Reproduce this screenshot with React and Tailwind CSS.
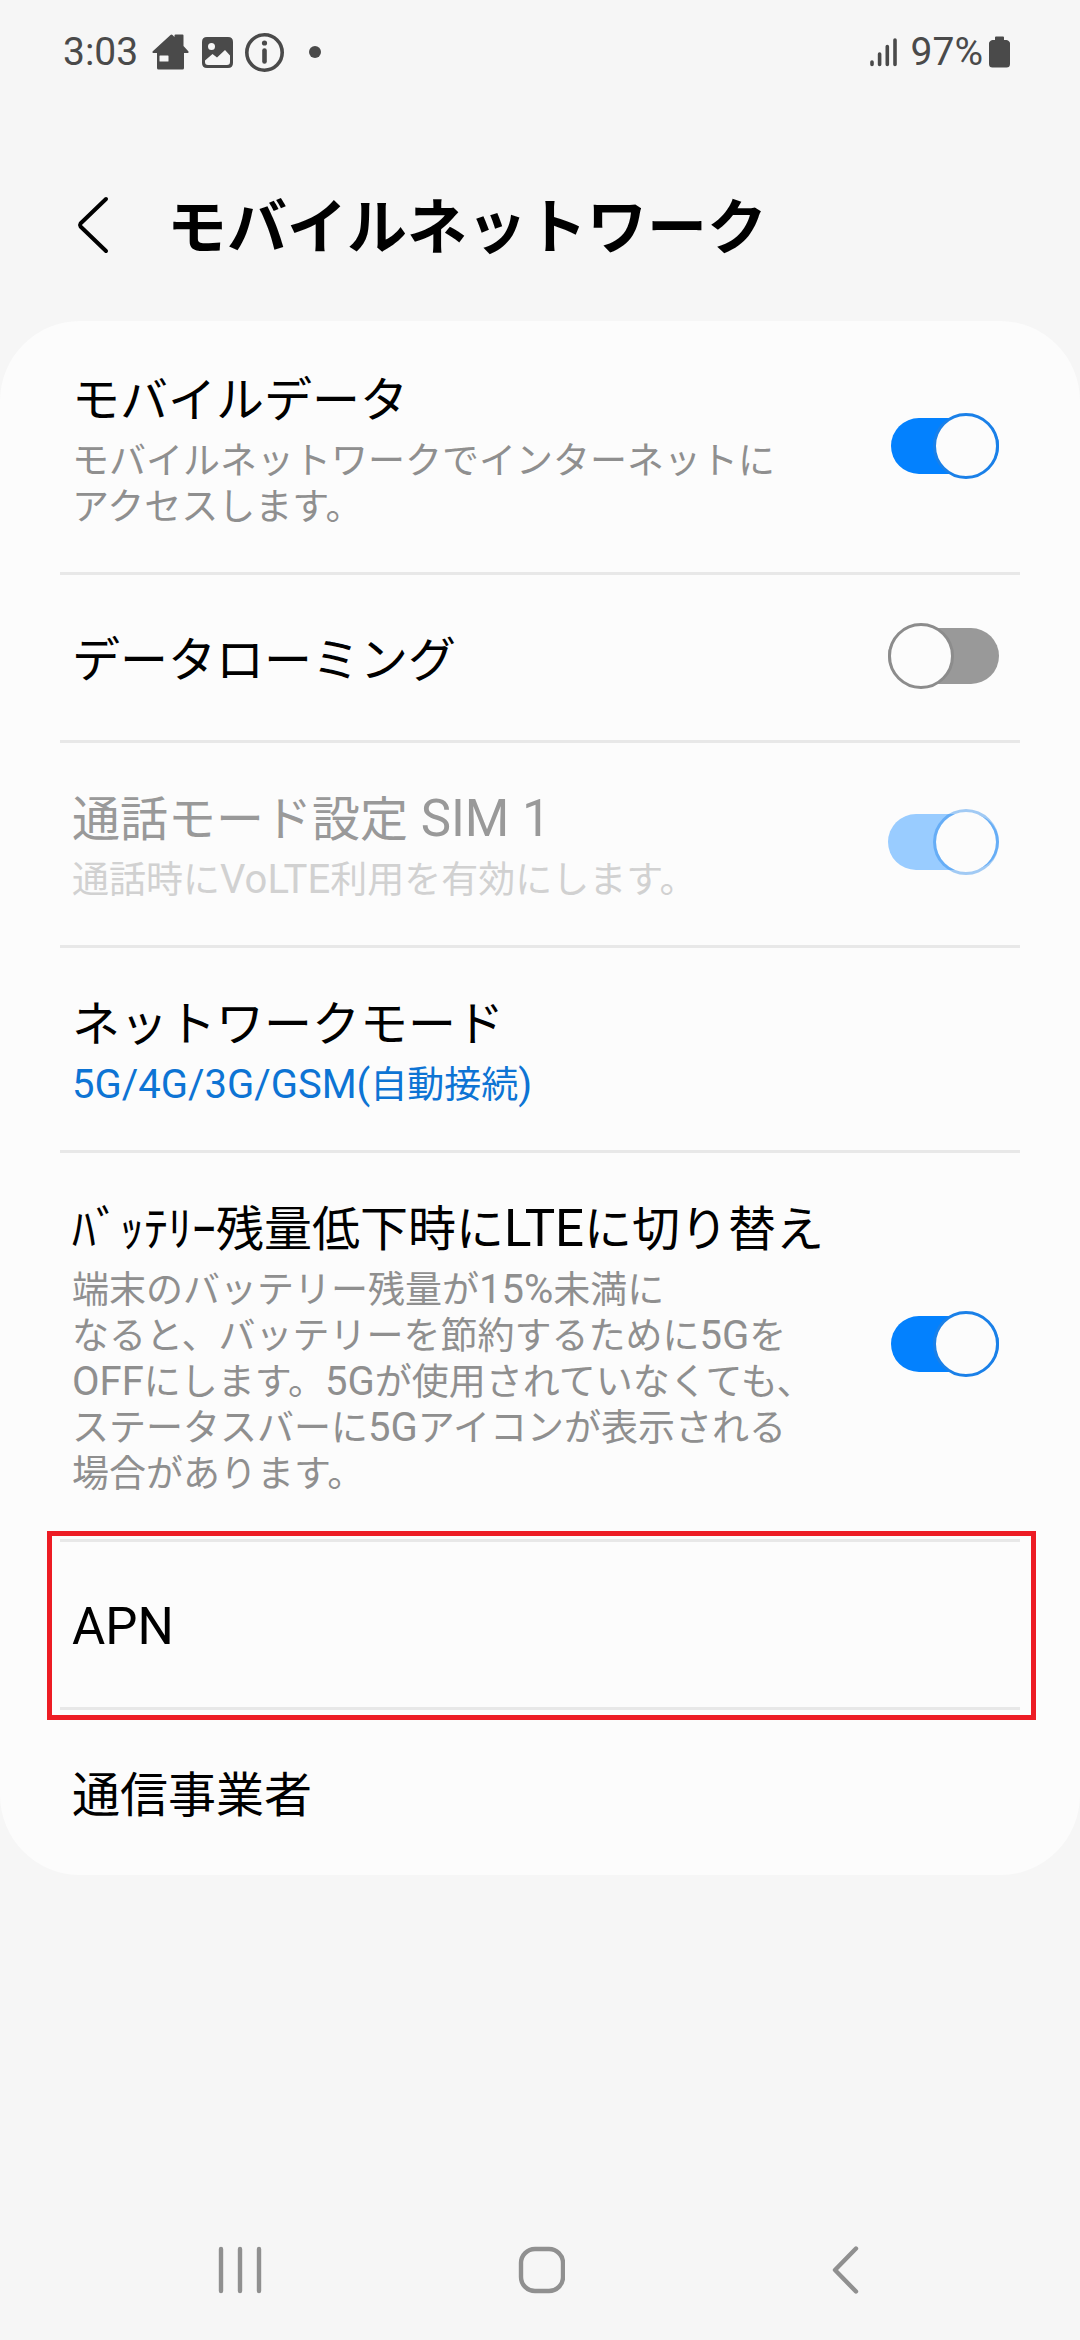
import React from "react";

const sections = [
  {
    id: "mobile-data",
    title: "モバイルデータ",
    lines: ["モバイルネットワークでインターネットに", "アクセスします。"],
    toggle: true,
    on: true,
  },
  { id: "roaming", title: "データローミング", toggle: true, on: false },
  {
    id: "call-mode",
    title: "通話モード設定 SIM 1",
    lines: ["通話時にVoLTE利用を有効にします。"],
    toggle: true,
    on: true,
    disabled: true,
  },
  {
    id: "network-mode",
    title: "ネットワークモード",
    lines: ["5G/4G/3G/GSM(自動接続)"],
    isValue: true,
  },
  {
    id: "battery-lte",
    title: "ﾊﾞｯﾃﾘｰ残量低下時にLTEに切り替え",
    lines: [
      "端末のバッテリー残量が15%未満に",
      "なると、バッテリーを節約するために5Gを",
      "OFFにします。5Gが使用されていなくても、",
      "ステータスバーに5Gアイコンが表示される",
      "場合があります。",
    ],
    toggle: true,
    on: true,
  },
  { id: "apn", title: "APN", highlighted: true },
  { id: "carriers", title: "通信事業者" },
];

// Latin runs are set slightly larger than the Japanese around them
function MixedText({ text, latinClass }) {
  return text.split(/([\x20-\x7e]+)/).map((part, i) =>
    i % 2 === 1 ? (
      <span key={i} className={latinClass}>
        {part}
      </span>
    ) : (
      part
    )
  );
}

function StatusBar() {
  return (
    <div className="flex h-[104px] items-center justify-between pl-[63px] pr-[70px] text-[39px] text-[#4a4a4a]">
      <div className="flex items-center">
        <span className="w-[89px]">3:03</span>
        <svg width="37" height="36" viewBox="0 0 37 36" fill="currentColor" aria-hidden="true">
          <path
            fillRule="evenodd"
            d="M18.500 1 Q19.500 0 20.500 1 L22.500 3 V1.500 Q22.500 0.500 23.500 0.500 H30.500 Q31.500 0.500 31.500 1.500 V12 L36.500 17.500 Q37 19 35.500 19 H32 V34 Q32 35.500 30.500 35.500 H6.500 Q5 35.500 5 34 V19 H1.500 Q0 19 0.500 17.500 Z M8 21.500 Q7.500 21.500 7.500 22 V27 Q7.500 27.500 8 27.500 H16 Q16.500 27.500 16.500 27 V22 Q16.500 21.500 16 21.500 Z"
          />
        </svg>
        <svg className="ml-[13px]" width="31" height="31" viewBox="0 0 31 31" fill="currentColor" aria-hidden="true">
          <path
            fillRule="evenodd"
            d="M5 0 H26 Q31 0 31 5 V26 Q31 31 26 31 H5 Q0 31 0 26 V5 Q0 0 5 0 Z M9.500 6 A3.500 3.500 0 1 0 9.500 13 A3.500 3.500 0 1 0 9.500 6 Z M3 23.500 V25 Q3 28 6 28 H25 Q28 28 28 25 V18.500 L23 13 L15 20.500 L10.500 17 Z"
          />
        </svg>
        <svg className="ml-3" width="39" height="39" viewBox="0 0 39 39" fill="none" aria-hidden="true">
          <circle cx="19.500" cy="19.500" r="17.700" stroke="currentColor" strokeWidth="3.600" />
          <circle cx="19.500" cy="10" r="2.600" fill="currentColor" />
          <path d="M19.500 17.500 V28.500" stroke="currentColor" strokeWidth="4.600" strokeLinecap="round" />
        </svg>
        <span className="ml-[25px] size-3 rounded-full bg-[#4a4a4a]" />
      </div>
      <div className="flex items-center">
        <svg width="27" height="30" viewBox="0 0 27 30" stroke="currentColor" strokeWidth="3.600" strokeLinecap="round" aria-hidden="true">
          <path d="M2 25 V27.500 M9.600 17 V27.500 M17.300 9.500 V27.500 M25 3 V27.500" />
        </svg>
        <span className="ml-[14px] mr-1.5">97%</span>
        <svg width="21" height="32" viewBox="0 0 21 32" fill="currentColor" aria-hidden="true">
          <path d="M7 0.500 H14 Q15 0.500 15 1.500 V4 H17.500 Q21 5 21 7.500 V28 Q21 31.500 17.500 31.500 H3.500 Q0 31.500 0 28 V7.500 Q0 5 3.500 4 H6 V1.500 Q6 0.500 7 0.500 Z" />
        </svg>
      </div>
    </div>
  );
}

function Toggle({ id, on, disabled }) {
  const [checked, setChecked] = React.useState(on);

  let look =
    "before:bg-[#999999] after:border-[#8c8c8c] after:justify-self-start";
  if (checked && disabled) {
    look =
      "before:bg-[#99ccff] after:border-[#1a80e8]/40 after:bg-clip-padding after:justify-self-end";
  } else if (checked) {
    look =
      "before:ml-[3px] before:bg-[#0381fe] after:border-[#1a80e8] after:justify-self-end";
  }

  return (
    <input
      id={id}
      type="checkbox"
      role="switch"
      checked={checked}
      disabled={disabled}
      onChange={(e) => setChecked(e.target.checked)}
      className={`mb-2.5 grid h-[66px] w-[111px] shrink-0 appearance-none items-center before:h-14 before:rounded-full before:[grid-area:1/1] after:size-[66px] after:rounded-full after:border-3 after:bg-[#fcfcfc] after:[grid-area:1/1] ${look}`}
    />
  );
}

function SettingRow({ item }) {
  let titleColor = "text-black";
  let lineColor = "text-[#8f8f8f]";
  if (item.disabled) {
    titleColor = "text-[#999999]";
    lineColor = "text-[#d1d1d1]";
  } else if (item.isValue) {
    lineColor = "text-[#0d74d4]";
  }

  const Text = item.toggle ? "label" : "button";
  const textProps = item.toggle ? { htmlFor: item.id } : { type: "button" };

  return (
    <li className="relative mx-[60px] flex min-h-[168px] items-center justify-between border-b-3 border-[#e8e8e8] pb-[41px] pl-3 pr-[21px] pt-[47px] last:min-h-[165px] last:border-b-0">
      <Text {...textProps} className="block grow text-left">
        <span className={`block text-[48px] leading-[60px] ${titleColor}`}>
          <MixedText text={item.title} latinClass="text-[51px] leading-none" />
        </span>
        {item.lines && (
          <span className={`mt-2 block text-[37px] leading-[46px] ${lineColor}`}>
            {item.lines.map((line) => (
              <span key={line} className="block whitespace-nowrap">
                <MixedText text={line} latinClass="text-[40px] leading-none" />
              </span>
            ))}
          </span>
        )}
      </Text>
      {item.toggle && <Toggle id={item.id} on={item.on} disabled={item.disabled} />}
      {item.highlighted && (
        <span className="pointer-events-none absolute -bottom-[13px] -left-[13px] -right-4 -top-[11px] z-10 border-5 border-[#ed1c24]" />
      )}
    </li>
  );
}

function NavBar() {
  return (
    <nav className="mt-auto grid h-[140px] grid-cols-3 items-center justify-items-center px-[90px] text-[#909090]">
      <button type="button" aria-label="履歴">
        <svg width="48" height="48" viewBox="0 0 48 48" stroke="currentColor" strokeWidth="4.400" strokeLinecap="round">
          <path d="M5 3 V45 M24 3 V45 M43 3 V45" />
        </svg>
      </button>
      <button type="button" aria-label="ホーム">
        <svg width="50" height="48" viewBox="0 0 50 48" fill="none" stroke="currentColor" strokeWidth="4.400">
          <rect x="6" y="3" width="42" height="42" rx="14" />
        </svg>
      </button>
      <button type="button" aria-label="戻る">
        <svg width="48" height="48" viewBox="0 0 48 48" fill="none" stroke="currentColor" strokeWidth="4.400" strokeLinecap="round" strokeLinejoin="round">
          <path d="M40 2.500 L19 24 L40 45.500" />
        </svg>
      </button>
    </nav>
  );
}

export default function App() {
  return (
    <div className="flex min-h-screen flex-col bg-[#f6f6f6] font-['Roboto','Noto_Sans_CJK_JP',sans-serif]" lang="ja">
      <StatusBar />
      <header className="flex h-[217px] items-center pl-[76px] pt-8">
        <button type="button" aria-label="上に移動">
          <svg className="mb-2" width="34" height="60" viewBox="0 0 34 60" fill="none" stroke="#000" strokeWidth="4" strokeLinecap="round" strokeLinejoin="round">
            <path d="M30 4 L4.500 28.500 Q3.500 30 4.500 31.500 L30 56" />
          </svg>
        </button>
        <h1 className="ml-[57px] text-[60px] font-bold leading-[90px] text-black">モバイルネットワーク</h1>
      </header>
      <main>
        <ul className="rounded-[80px] bg-[#fcfcfc] pt-[3px]">
          {sections.map((item) => (
            <SettingRow key={item.id} item={item} />
          ))}
        </ul>
      </main>
      <NavBar />
    </div>
  );
}
